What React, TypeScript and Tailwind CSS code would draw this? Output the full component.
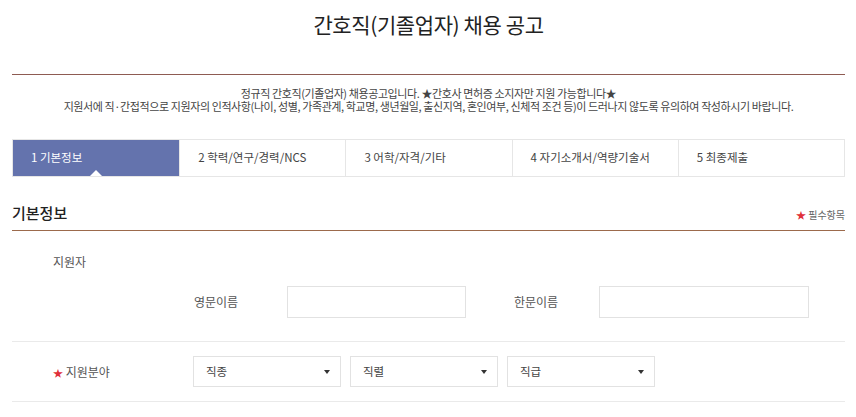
import { useState } from "react";

const tabs = ["1 기본정보", "2 학력/연구/경력/NCS", "3 어학/자격/기타", "4 자기소개서/역량기술서", "5 최종제출"];

export default function App() {
  const [active, setActive] = useState(0);

  return (
    <div className="bg-white min-h-screen text-[#333]" style={{ fontFamily: '"Noto Sans CJK KR", "Noto Sans", sans-serif' }}>
      <div className="pl-[12px] pr-[11px]">
        <h1 className="text-center text-[21px] leading-[30px] pt-[9px] text-[#222] tracking-[-0.4px]">간호직(기졸업자) 채용 공고</h1>

        <div className="mt-[35px] border-t border-[#8e5b52]" />
        <div className="text-center text-[11px] leading-[13px] text-[#444] pt-[12px] tracking-[-0.4px]">
          <p>정규직 간호직(기졸업자) 채용공고입니다. ★간호사 면허증 소지자만 지원 가능합니다★</p>
          <p>지원서에 직·간접적으로 지원자의 인적사항(나이, 성별, 가족관계, 학교명, 생년월일, 출신지역, 혼인여부, 신체적 조건 등)이 드러나지 않도록 유의하여 작성하시기 바랍니다.</p>
        </div>

        {/* 단계 탭 */}
        <div className="mt-[26px] grid grid-cols-5 border border-[#e6e6e6] h-[38px]">
          {tabs.map((t, i) => (
            <button
              key={t}
              onClick={() => setActive(i)}
              className={
                "relative text-left pl-[18px] text-[11.5px] " +
                (i > 0 ? "border-l border-[#e6e6e6] " : "") +
                (i === active ? "bg-[#6473ad] text-white" : "bg-white text-[#444]")
              }
            >
              {t}
              {i === active && (
                <span className="absolute left-1/2 -translate-x-1/2 bottom-0 w-0 h-0 border-l-[6px] border-r-[6px] border-b-[6px] border-l-transparent border-r-transparent border-b-white" />
              )}
            </button>
          ))}
        </div>

        <div className="mt-[26px] flex items-end justify-between pb-[7px] border-b border-[#9c6a4c]">
          <h2 className="text-[15px] leading-[20px] font-medium text-[#222]">기본정보</h2>
          <span className="text-[10px] text-[#666] mb-[1px]">
            <span className="text-[#e0303a]">★</span> 필수항목
          </span>
        </div>

        {/* 지원자 */}
        <div className="border-b border-[#eaeaea] pb-[23px]">
          <div className="pl-[41px] pt-[22px] text-[12px] text-[#555]">지원자</div>
          <div className="flex items-center mt-[15px] pl-[182px]">
            <span className="w-[93px] text-[12px] text-[#555]">영문이름</span>
            <input className="w-[179px] h-[32px] border border-[#e2e2e2]" />
            <span className="ml-[48px] w-[85px] text-[12px] text-[#555]">한문이름</span>
            <input className="w-[210px] h-[32px] border border-[#e2e2e2]" />
          </div>
        </div>

        {/* 지원분야 */}
        <div className="flex items-center border-b border-[#eaeaea] py-[14px]">
          <span className="w-[181px] pl-[41px] text-[12px] text-[#555]">
            <span className="text-[#e0303a] text-[10px]">★</span> 지원분야
          </span>
          <div className="flex gap-[9px]">
            {["직종", "직렬", "직급"].map((s) => (
              <div key={s} className="w-[148px] h-[31px] border border-[#e2e2e2] flex items-center justify-between pl-[12px] pr-[10px] text-[11.5px] text-[#444]">
                {s}
                <span className="w-0 h-0 border-l-[3.5px] border-r-[3.5px] border-t-[4px] border-l-transparent border-r-transparent border-t-[#333]" />
              </div>
            ))}
          </div>
        </div>
      </div>
    </div>
  );
}
